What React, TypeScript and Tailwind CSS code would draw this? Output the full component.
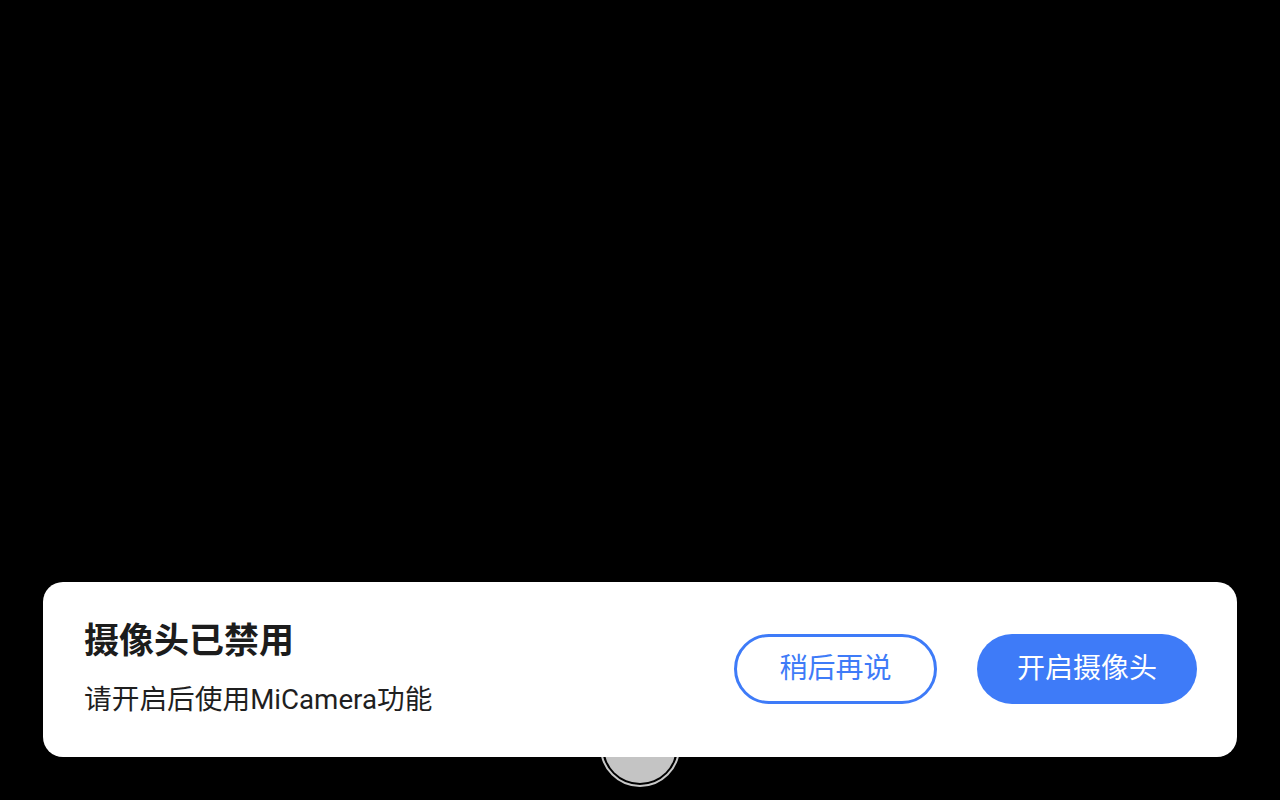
import React from "react";

const font = { fontFamily: "Roboto, 'Noto Sans CJK SC', sans-serif" };

export default function App() {
  return (
    <div className="relative w-full h-[800px] bg-black overflow-hidden flex flex-col justify-end px-[43px] pb-[43px]" style={font}>
      {/* shutter button under the dialog */}
      <div className="absolute left-[600px] top-[707px] w-[80px] h-[80px] rounded-full border-2 border-[#c9c9c9] p-[2px] bg-black">
        <div className="w-full h-full rounded-full bg-[#c4c4c4]" />
      </div>

      <div className="relative z-10 h-[175px] bg-white rounded-[20px] flex items-center justify-between pl-[41px] pr-[40px] pb-px">
        <div className="flex flex-col gap-[17px]">
          <h2 className="text-[35px] leading-[44px] font-bold text-[#1c1c1c]">摄像头已禁用</h2>
          <p className="text-[27.7px] leading-[38px] text-[#1f1f1f]">请开启后使用MiCamera功能</p>
        </div>
        <div className="flex items-center gap-[40px]">
          <button className="w-[203px] h-[70px] rounded-full border-[3px] border-[#3e7bf8] bg-white text-[#3e7bf8] text-[28px] flex items-center justify-center">
            稍后再说
          </button>
          <button className="w-[220px] h-[70px] rounded-full bg-[#3e7bf8] text-white text-[28px] flex items-center justify-center">
            开启摄像头
          </button>
        </div>
      </div>
    </div>
  );
}
